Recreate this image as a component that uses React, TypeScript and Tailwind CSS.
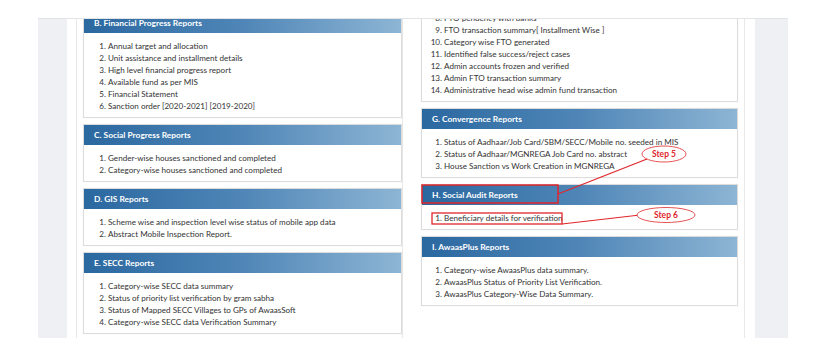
import React from 'react';

type Section = {
  title?: string;
  items: string[];
  start?: number;
};

const LEFT: Section[] = [
  {
    title: 'B. Financial Progress Reports',
    items: [
      'Annual target and allocation',
      'Unit assistance and installment details',
      'High level financial progress report',
      'Available fund as per MIS',
      'Financial Statement',
      'Sanction order [2020-2021] [2019-2020]',
    ],
  },
  {
    title: 'C. Social Progress Reports',
    items: ['Gender-wise houses sanctioned and completed', 'Category-wise houses sanctioned and completed'],
  },
  {
    title: 'D. GIS Reports',
    items: ['Scheme wise and inspection level wise status of mobile app data', 'Abstract Mobile Inspection Report.'],
  },
  {
    title: 'E. SECC Reports',
    items: [
      'Category-wise SECC data summary',
      'Status of priority list verification by gram sabha',
      'Status of Mapped SECC Villages to GPs of AwaasSoft',
      'Category-wise SECC data Verification Summary',
    ],
  },
];

const RIGHT: Section[] = [
  {
    start: 8,
    items: [
      'FTO pendency with banks',
      'FTO transaction summary[ Installment Wise ]',
      'Category wise FTO generated',
      'Identified false success/reject cases',
      'Admin accounts frozen and verified',
      'Admin FTO transaction summary',
      'Administrative head wise admin fund transaction',
    ],
  },
  {
    title: 'G. Convergence Reports',
    items: [
      'Status of Aadhaar/Job Card/SBM/SECC/Mobile no. seeded in MIS',
      'Status of Aadhaar/MGNREGA Job Card no. abstract',
      'House Sanction vs Work Creation in MGNREGA',
    ],
  },
  {
    title: 'H. Social Audit Reports',
    items: ['Beneficiary details for verification'],
  },
  {
    title: 'I. AwaasPlus Reports',
    items: [
      'Category-wise AwaasPlus data summary.',
      'AwaasPlus Status of Priority List Verification.',
      'AwaasPlus Category-Wise Data Summary.',
    ],
  },
];

const ReportCard = ({ section, indent }: { section: Section; indent: string }) => (
  <div className={`bg-white border-x border-b border-[#dcdcdc] shadow-[0_0_1px_rgba(0,0,0,0.08)] ${section.title ? 'border-t' : ''}`}>
    {section.title && (
      <div className="h-[20px] flex items-center pl-[10px] bg-gradient-to-r from-[#2a68a0] via-[#4f86b7] to-[#8db5d4] text-white font-bold text-[8.4px]">
        {section.title}
      </div>
    )}
    <ol
      start={section.start}
      className={`list-decimal ${indent} ${section.title ? 'pt-[7px]' : 'pt-0'} pb-[5px] text-[8.1px] leading-[12px] text-[#333]`}
    >
      {section.items.map((it) => (
        <li key={it}>{it}</li>
      ))}
    </ol>
  </div>
);

export default function App() {
  return (
    <div className="relative w-[821px] h-[353px] bg-white overflow-hidden font-['Lato','Liberation_Sans',sans-serif]">
      <div className="ml-[38px] mt-[18px] w-[750px] h-[320px] border-t border-[#e2e4e8] flex overflow-hidden">
        <div className="w-[29px] bg-[#eef0f4]" />

        <div className="w-[688px] flex pl-[9px] overflow-hidden">
          {/* left column */}
          <div className="w-[327px] border-x border-[#e8e8e8] pl-[6px] -mt-[7px] flex flex-col gap-[6px]">
            {LEFT.map((s) => (
              <ReportCard key={s.title} section={s} indent="pl-[24px]" />
            ))}
          </div>

          {/* right column */}
          <div className="w-[324px] ml-[18px] border-r border-[#e8e8e8] pr-[6px] -mt-[7px] flex flex-col gap-[6px]">
            {RIGHT.map((s, i) => (
              <ReportCard key={i} section={s} indent="pl-[22px]" />
            ))}
          </div>
        </div>

        <div className="w-[33px] bg-[#eef0f4]" />
      </div>

      {/* step annotations */}
      <svg className="absolute left-0 top-0 pointer-events-none" width="821" height="353">
        <rect x="422" y="185" width="136" height="18" fill="none" stroke="#e0262b" strokeWidth="1.5" />
        <rect x="432" y="213" width="130" height="11" fill="none" stroke="#e0262b" strokeWidth="1.3" />
        <line x1="558" y1="194" x2="647" y2="159" stroke="#e0262b" strokeWidth="1.2" />
        <line x1="562" y1="224" x2="640" y2="215" stroke="#e0262b" strokeWidth="1.2" />
        <ellipse cx="664" cy="154" rx="22" ry="8" fill="white" stroke="#e0262b" strokeWidth="0.8" />
        <ellipse cx="666" cy="215" rx="29" ry="7.5" fill="white" stroke="#e0262b" strokeWidth="0.8" />
        <text x="664" y="157" textAnchor="middle" fill="#e0262b" fontSize="8.5" fontWeight="bold" fontFamily="Lato, sans-serif">
          Step 5
        </text>
        <text x="666" y="218" textAnchor="middle" fill="#e0262b" fontSize="8.5" fontWeight="bold" fontFamily="Lato, sans-serif">
          Step 6
        </text>
      </svg>
    </div>
  );
}
